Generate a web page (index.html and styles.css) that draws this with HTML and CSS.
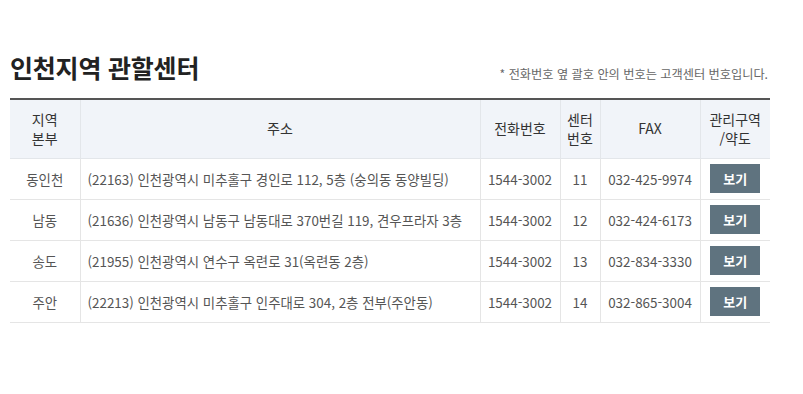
FILE: index.html
```html
<!DOCTYPE html>
<html lang="ko">
<head>
<meta charset="utf-8">
<link rel="stylesheet" href="styles.css">
</head>
<body>
<div class="wrap">
  <div class="head">
    <h2 class="title">인천지역 관할센터</h2>
    <p class="note">* 전화번호 옆 괄호 안의 번호는 고객센터 번호입니다.</p>
  </div>
  <table class="tbl">
    <colgroup>
      <col class="c1"><col class="c2"><col class="c3"><col class="c4"><col class="c5"><col class="c6">
    </colgroup>
    <thead>
      <tr>
        <th>지역<br>본부</th>
        <th>주소</th>
        <th>전화번호</th>
        <th>센터<br>번호</th>
        <th>FAX</th>
        <th>관리구역<br>/약도</th>
      </tr>
    </thead>
    <tbody>
      <tr>
        <td>동인천</td>
        <td class="addr">(22163) 인천광역시 미추홀구 경인로 112, 5층 (숭의동 동양빌딩)</td>
        <td>1544-3002</td>
        <td>11</td>
        <td>032-425-9974</td>
        <td><button class="btn" type="button">보기</button></td>
      </tr>
      <tr>
        <td>남동</td>
        <td class="addr">(21636) 인천광역시 남동구 남동대로 370번길 119, 견우프라자 3층</td>
        <td>1544-3002</td>
        <td>12</td>
        <td>032-424-6173</td>
        <td><button class="btn" type="button">보기</button></td>
      </tr>
      <tr>
        <td>송도</td>
        <td class="addr">(21955) 인천광역시 연수구 옥련로 31(옥련동 2층)</td>
        <td>1544-3002</td>
        <td>13</td>
        <td>032-834-3330</td>
        <td><button class="btn" type="button">보기</button></td>
      </tr>
      <tr>
        <td>주안</td>
        <td class="addr">(22213) 인천광역시 미추홀구 인주대로 304, 2층 전부(주안동)</td>
        <td>1544-3002</td>
        <td>14</td>
        <td>032-865-3004</td>
        <td><button class="btn" type="button">보기</button></td>
      </tr>
    </tbody>
  </table>
</div>
</body>
</html>
```

FILE: styles.css
```css
* { box-sizing: border-box; }
html, body { margin: 0; padding: 0; background: #fff; }
body {
  font-family: "Noto Sans CJK KR", "Noto Sans", sans-serif;
  color: #555;
}
.wrap {
  width: 760px;
  margin-left: 10px;
  padding-top: 51px;
}
.head {
  display: flex;
  justify-content: space-between;
  align-items: flex-end;
  padding-bottom: 14px;
}
.title {
  margin: 0;
  font-size: 25px;
  line-height: 33px;
  font-weight: 700;
  color: #222;
  letter-spacing: -0.2px;
}
.note {
  margin: 0 2px 2px 0;
  font-size: 12.2px;
  line-height: 16px;
  color: #666;
}
.tbl {
  width: 760px;
  border-collapse: collapse;
  table-layout: fixed;
  border-top: 2px solid #555;
}
.c1 { width: 70px; }
.c2 { width: 400px; }
.c3 { width: 80px; }
.c4 { width: 40px; }
.c5 { width: 100px; }
.c6 { width: 70px; }
.tbl th {
  background: #f1f4f9;
  height: 59px;
  font-size: 14px;
  line-height: 19px;
  font-weight: 400;
  color: #333;
  border-left: 1px solid #e3e6ea;
  border-bottom: 1px solid #e3e6ea;
  padding: 0;
  text-align: center;
}
.tbl th:first-child, .tbl td:first-child { border-left: none; }
.tbl td {
  height: 41px;
  font-size: 13.4px;
  color: #555;
  text-align: center;
  border-left: 1px solid #e5e5e5;
  border-bottom: 1px solid #e5e5e5;
  padding: 0;
  white-space: nowrap;
}
.tbl td.addr {
  text-align: left;
  padding-left: 7px;
}
.btn {
  display: inline-block;
  width: 50px;
  height: 29px;
  border: none;
  background: #5f737f;
  color: #fff;
  font-family: inherit;
  font-size: 13px;
  font-weight: 700;
  padding: 0;
  vertical-align: middle;
  cursor: pointer;
}
```
